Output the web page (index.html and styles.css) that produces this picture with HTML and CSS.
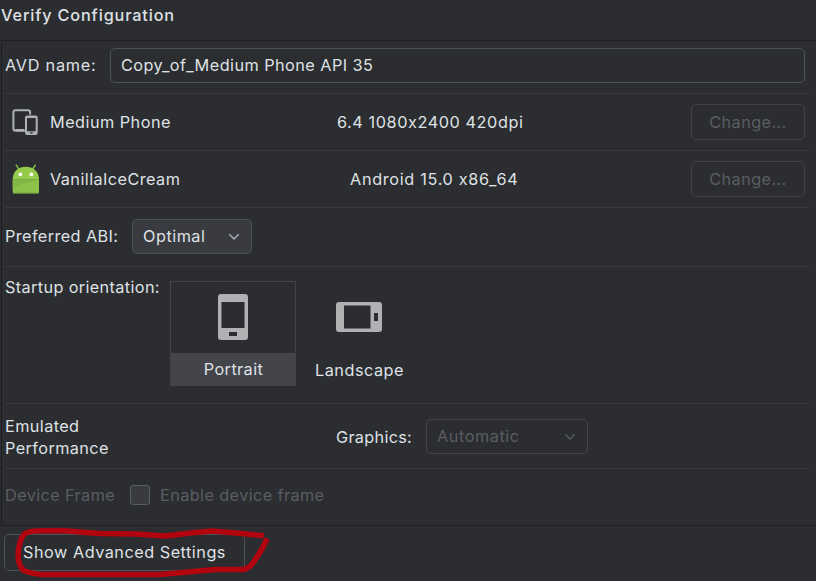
FILE: index.html
```html
<!DOCTYPE html>
<html lang="en">
<head>
<meta charset="utf-8">
<title>Verify Configuration</title>
<link rel="stylesheet" href="styles.css">
</head>
<body>
<main class="dialog">
  <h1 class="title">Verify Configuration</h1>
  <section class="panel">
    <div class="row row-name">
      <span class="label">AVD name:</span>
      <div class="input">Copy_of_Medium Phone API 35</div>
    </div>
    <div class="row row-device">
      <svg class="device-icon" width="28" height="28" viewBox="0 0 28 28">
        <path d="M13.500 22.600H3.200a1.800 1.800 0 0 1-1.800-1.800V4a1.800 1.800 0 0 1 1.800-1.800h13.100A1.800 1.800 0 0 1 18.100 4v2.500" fill="none" stroke="#afb1b3" stroke-width="2"/>
        <path d="M12 22.300H3.500" fill="none" stroke="#afb1b3" stroke-width="2.600"/>
        <path fill="#afb1b3" fill-rule="evenodd" d="M15.200 7.500h8.300a2.200 2.200 0 0 1 2.200 2.200v15a2.200 2.200 0 0 1-2.200 2.200h-8.300a2.200 2.200 0 0 1-2.200-2.200v-15a2.200 2.200 0 0 1 2.200-2.200zM15 10v13.300h8.700V10zM17.900 24.300v1.200h2.800v-1.200z"/>
      </svg>
      <span class="device-name">Medium Phone</span>
      <span class="spec">6.4 1080x2400 420dpi</span>
      <button class="change" disabled>Change...</button>
    </div>
    <div class="row row-device">
      <svg class="device-icon icon-android" width="28" height="30" viewBox="0 0 28 30">
        <path d="M4.300 1.200l2.600 4M23.200 1.200l-2.600 4" stroke="#7cb342" stroke-width="1.600" stroke-linecap="round"/>
        <path d="M.7 15.500C.7 7 6.600 2.700 13.700 2.700S27 7 27 15.500z" fill="#97cb4b"/>
        <path d="M.7 15.500H27V28a1.500 1.500 0 0 1-1.500 1.500H2.200A1.500 1.500 0 0 1 .7 28z" fill="#8bc34a"/>
        <path d="M.7 15.500H27L9 20.500.7 24z" fill="#80b745"/>
        <path d="M1 28.700h25.700" stroke="#7cae42"/>
        <circle cx="8.300" cy="10.400" r="1.900" fill="#fff"/>
        <circle cx="19.400" cy="10.400" r="1.900" fill="#fff"/>
      </svg>
      <span class="device-name device-system">VanillaIceCream</span>
      <span class="spec spec-system">Android 15.0 x86_64</span>
      <button class="change" disabled>Change...</button>
    </div>
    <div class="row row-abi">
      <span class="label">Preferred ABI:</span>
      <div class="select select-abi"><span>Optimal</span>
        <svg class="chevron" width="12" height="8" viewBox="0 0 12 8"><path d="M1.300 1.300L6 6l4.700-4.700"/></svg>
      </div>
    </div>
    <div class="row row-orientation">
      <span class="label label-orientation">Startup orientation:</span>
      <div class="tile tile-selected">
        <div class="tile-picture">
          <svg width="30" height="46" viewBox="0 0 30 46"><path fill="#afb1b3" fill-rule="evenodd" d="M3 0h24a3 3 0 0 1 3 3v40a3 3 0 0 1-3 3H3a3 3 0 0 1-3-3V3a3 3 0 0 1 3-3zM3.500 8v26h23V8zM11 38v4h8v-4z"/></svg>
        </div>
        <span class="tile-label">Portrait</span>
      </div>
      <div class="tile tile-landscape">
        <div class="tile-picture">
          <svg width="46" height="30" viewBox="0 0 46 30"><path fill="#afb1b3" fill-rule="evenodd" d="M3 0h40a3 3 0 0 1 3 3v24a3 3 0 0 1-3 3H3a3 3 0 0 1-3-3V3a3 3 0 0 1 3-3zM8 3.500v23h26.500v-23zM38 11v8h4v-8z"/></svg>
        </div>
        <span class="tile-label">Landscape</span>
      </div>
    </div>
    <div class="row row-performance">
      <span class="label label-performance">Emulated<br>Performance</span>
      <span class="label label-graphics">Graphics:</span>
      <div class="select select-graphics"><span>Automatic</span>
        <svg class="chevron" width="12" height="8" viewBox="0 0 12 8"><path d="M1.300 1.300L6 6l4.700-4.700"/></svg>
      </div>
    </div>
    <div class="row row-frame">
      <span class="label label-frame">Device Frame</span>
      <span class="checkbox"></span>
      <span class="label">Enable device frame</span>
    </div>
  </section>
  <footer class="footer">
    <button class="advanced">Show Advanced Settings</button>
    <svg class="marker" width="280" height="56" viewBox="0 525 280 56">
      <path d="M261 535.500L242 533.500 212 531 190 533 166 536 136 534 100 533.500 60 530.500 36 531Q25 531 22 537 17 549 18.500 560 20 569 25 571 36 575 48 574.500H160L216 569.500H244Q250 568 255 560L262 549 266 541"/>
    </svg>
  </footer>
</main>
</body>
</html>
```
FILE: styles.css
```css
* { box-sizing: border-box; }

body {
  margin: 0;
  background: #2b2d30;
  color: #dfe1e5;
  font: 16.25px/22px Inter, "Liberation Sans", sans-serif;
  letter-spacing: 0.4px;
  white-space: nowrap;
}

.dialog { height: 581px; overflow: hidden; }

.title {
  height: 40px;
  margin: 0;
  padding: 4px 0 0 1px;
  font-size: 16.25px;
  font-weight: 500;
  letter-spacing: 0.85px;
}

.panel {
  margin-left: 1px;
  padding: 0 7px 0 3px;
  border: 1px solid #1e1f22;
  border-right: 0;
}

.row {
  display: flex;
  align-items: center;
  border-bottom: 1px solid #393b40;
}

.row-name { height: 53px; padding-right: 4px; }
.row-name .label { width: 105px; padding-bottom: 4px; letter-spacing: 0.75px; }

.input {
  flex: 1;
  height: 35px;
  margin-bottom: 3px;
  padding: 5px 10px;
  border: 1px solid #4e5157;
  border-radius: 5px;
  letter-spacing: 0.45px;
}

.row-device { height: 57px; padding: 0 4px 0 7px; }
.device-icon { flex: none; margin-right: 10px; }
.icon-android { margin-top: -1px; }
.device-name { width: 287px; letter-spacing: 0.47px; }
.device-system { letter-spacing: 0.43px; }
.spec { letter-spacing: 0.57px; }
.spec-system { margin-left: 13px; letter-spacing: 0.68px; }

.change {
  width: 114px;
  height: 36px;
  margin-left: auto;
  padding: 0;
  border: 1.5px solid #404247;
  border-radius: 5px;
  background: transparent;
  color: #5a5d63;
  font: inherit;
  letter-spacing: 0.4px;
}

.row-abi { height: 59px; }
.row-abi .label { width: 127px; padding-bottom: 3px; }

.select {
  display: flex;
  align-items: center;
  justify-content: space-between;
  height: 35px;
  padding: 0 11px 1px 10px;
  border: 1px solid #4e5157;
  border-radius: 5px;
  background: #393b40;
}

.chevron { fill: none; stroke: #b4b8bf; stroke-width: 1.25; margin-top: 2px; }
.select-abi { width: 120px; margin-bottom: 1px; letter-spacing: 0.5px; }

.row-orientation { height: 137px; align-items: flex-start; padding-top: 14px; }
.label-orientation { width: 165px; margin-top: -5px; letter-spacing: 0.36px; }

.tile {
  display: flex;
  flex-direction: column;
  width: 126px;
  height: 105px;
  border: 1px solid transparent;
  text-align: center;
}

.tile-selected { border-color: #43454a; }
.tile-picture { display: flex; align-items: center; justify-content: center; height: 71px; padding-bottom: 1px; }
.tile-label { flex: 1; padding: 5px 0 0 1px; }
.tile-selected .tile-label { background: #43454a; }
.tile-landscape .tile-label { padding-top: 6px; letter-spacing: 0.5px; }

.row-performance { height: 65px; }
.label-performance { width: 331px; padding-top: 2px; }
.label-graphics { width: 90px; padding-top: 2px; letter-spacing: 0.3px; }

.select-graphics {
  width: 162px;
  border-color: #43454a;
  background: transparent;
  color: #5a5d63;
  letter-spacing: 0.55px;
}
.select-graphics .chevron { stroke: #5a5d63; }

.row-frame { height: 56px; border-bottom: 0; padding-bottom: 4px; color: #5a5d63; }
.label-frame { width: 125px; }

.checkbox {
  width: 20px;
  height: 20px;
  margin-right: 10px;
  border: 1px solid #5a5d63;
  border-radius: 3px;
  background: #393b40;
}

.footer { position: relative; padding: 8px 0 0 4px; }

.advanced {
  display: block;
  width: 241px;
  height: 37px;
  padding: 0 0 2px;
  border: 1.5px solid #4e5157;
  border-radius: 5px;
  background: transparent;
  color: #dfe1e5;
  font: inherit;
  letter-spacing: 0.5px;
}

.marker {
  position: absolute;
  left: 0;
  top: -1px;
  fill: none;
  stroke: #b1040e;
  stroke-width: 5.5;
  stroke-linecap: square;
  stroke-linejoin: round;
}
```
